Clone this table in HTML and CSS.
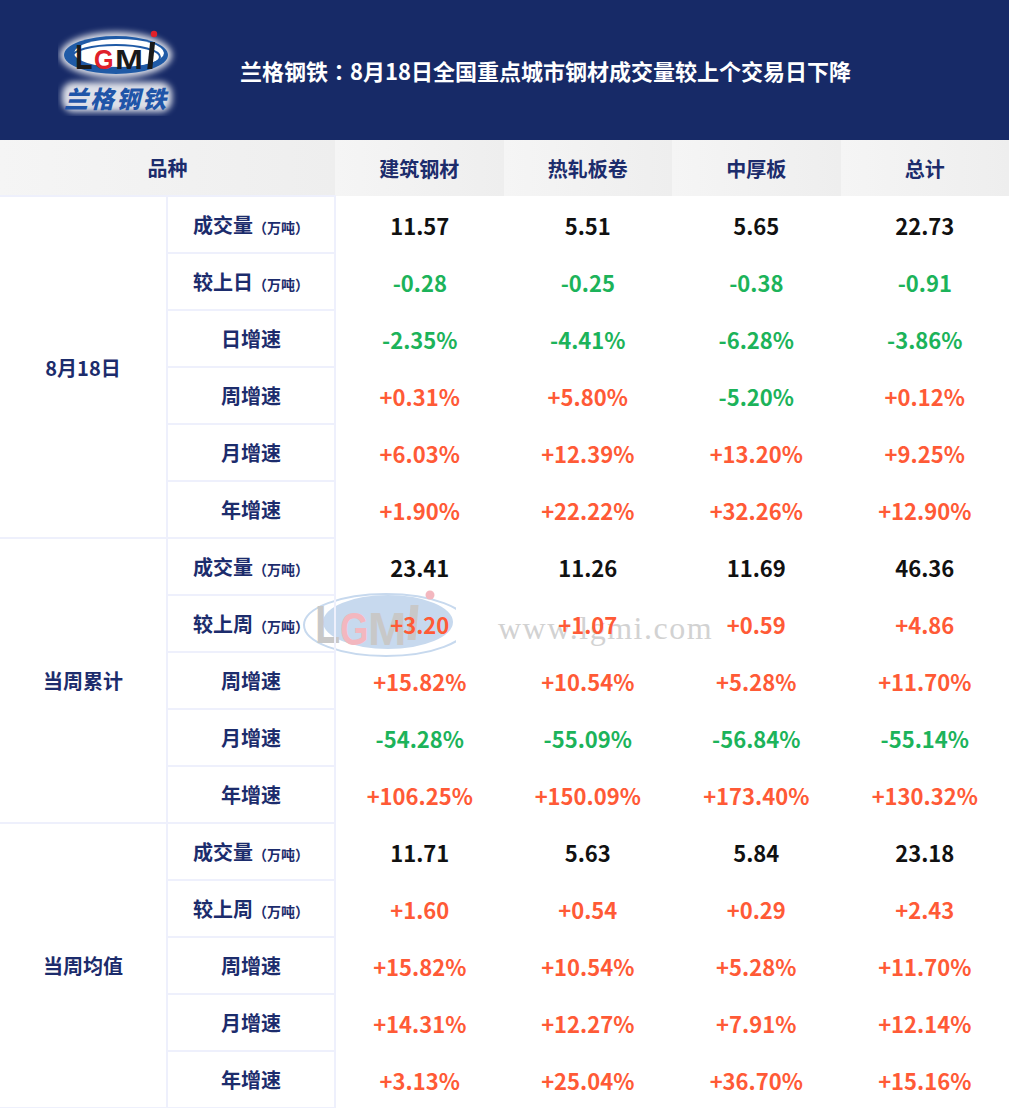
FILE: index.html
```html
<!DOCTYPE html>
<html lang="zh-CN">
<head>
<meta charset="utf-8">
<title>兰格钢铁</title>
<link rel="stylesheet" href="styles.css">
</head>
<body>
<div class="page">
  <header class="banner">
    <svg class="logo" width="124" height="92" viewBox="0 0 124 92">
      <defs>
        <filter id="glow" x="-20%" y="-20%" width="140%" height="140%">
          <feGaussianBlur stdDeviation="3"/>
        </filter>
      </defs>
      <g filter="url(#glow)" fill="#ffffff" opacity="0.85">
        <ellipse cx="58" cy="31" rx="56" ry="23"/>
        <rect x="4" y="58" width="110" height="30" rx="12"/>
      </g>
      <ellipse cx="58" cy="31" rx="52" ry="19" fill="#1f5aa6"/>
      <ellipse cx="61" cy="29" rx="45" ry="14" fill="#ffffff"/>
      <ellipse cx="58" cy="33" rx="44" ry="12" fill="none" stroke="#1f5aa6" stroke-width="2"/>
      <text class="lg-l" transform="translate(17 45) scale(0.8 1)">L</text>
      <text class="lg-g" transform="translate(36 45) scale(0.9 1)">G</text>
      <text class="lg-m" transform="translate(57 45) scale(1.2 1)">M</text>
      <rect x="94" y="18" width="5" height="27" fill="#1a1a1a" transform="skewX(-6)"/>
      <circle cx="96" cy="10" r="3.2" fill="#e0202a"/>
      <text x="6" y="84" class="lg-cn">兰格钢铁</text>
    </svg>
    <h1 class="title">兰格钢铁<span class="colon" lang="zh-TW">：</span>8月18日全国重点城市钢材成交量较上个交易日下降</h1>
  </header>

  <div class="table-wrap">
    <div class="watermark">
      <svg class="wm-logo" width="156" height="70" viewBox="0 0 156 70">
        <ellipse cx="86" cy="37" rx="82" ry="31" fill="none" stroke="#c7d9ee" stroke-width="2"/>
        <ellipse cx="88" cy="34" rx="65" ry="27" fill="#c7d9ee"/>
        <text class="wm-l" transform="translate(15 55) scale(0.78 1)">L</text>
        <text class="wm-g" transform="translate(40 57) scale(0.8 1)">G</text>
        <text class="wm-m" transform="translate(68 57)">M</text>
        <rect x="112" y="17" width="8" height="35" fill="#c8c8c8" transform="skewX(-5)"/>
        <circle cx="130" cy="7" r="4.5" fill="#f3b7bf"/>
      </svg>
      <span class="wm-url">www.lgmi.com</span>
    </div>

    <table class="grid">
      <colgroup>
        <col class="c-group">
        <col class="c-metric">
        <col class="c-val">
        <col class="c-val">
        <col class="c-val">
        <col class="c-val">
      </colgroup>
      <thead>
        <tr>
          <th colspan="2">品种</th>
          <th>建筑钢材</th>
          <th>热轧板卷</th>
          <th>中厚板</th>
          <th>总计</th>
        </tr>
      </thead>
      <tbody class="grp">
        <tr>
          <td class="group" rowspan="6">8月18日</td>
          <td class="metric">成交量<small>（万吨）</small></td>
          <td class="v blk">11.57</td><td class="v blk">5.51</td><td class="v blk">5.65</td><td class="v blk">22.73</td>
        </tr>
        <tr>
          <td class="metric">较上日<small>（万吨）</small></td>
          <td class="v dn">-0.28</td><td class="v dn">-0.25</td><td class="v dn">-0.38</td><td class="v dn">-0.91</td>
        </tr>
        <tr>
          <td class="metric">日增速</td>
          <td class="v dn">-2.35%</td><td class="v dn">-4.41%</td><td class="v dn">-6.28%</td><td class="v dn">-3.86%</td>
        </tr>
        <tr>
          <td class="metric">周增速</td>
          <td class="v up">+0.31%</td><td class="v up">+5.80%</td><td class="v dn">-5.20%</td><td class="v up">+0.12%</td>
        </tr>
        <tr>
          <td class="metric">月增速</td>
          <td class="v up">+6.03%</td><td class="v up">+12.39%</td><td class="v up">+13.20%</td><td class="v up">+9.25%</td>
        </tr>
        <tr>
          <td class="metric">年增速</td>
          <td class="v up">+1.90%</td><td class="v up">+22.22%</td><td class="v up">+32.26%</td><td class="v up">+12.90%</td>
        </tr>
      </tbody>
      <tbody class="grp">
        <tr>
          <td class="group" rowspan="5">当周累计</td>
          <td class="metric">成交量<small>（万吨）</small></td>
          <td class="v blk">23.41</td><td class="v blk">11.26</td><td class="v blk">11.69</td><td class="v blk">46.36</td>
        </tr>
        <tr>
          <td class="metric">较上周<small>（万吨）</small></td>
          <td class="v up">+3.20</td><td class="v up">+1.07</td><td class="v up">+0.59</td><td class="v up">+4.86</td>
        </tr>
        <tr>
          <td class="metric">周增速</td>
          <td class="v up">+15.82%</td><td class="v up">+10.54%</td><td class="v up">+5.28%</td><td class="v up">+11.70%</td>
        </tr>
        <tr>
          <td class="metric">月增速</td>
          <td class="v dn">-54.28%</td><td class="v dn">-55.09%</td><td class="v dn">-56.84%</td><td class="v dn">-55.14%</td>
        </tr>
        <tr>
          <td class="metric">年增速</td>
          <td class="v up">+106.25%</td><td class="v up">+150.09%</td><td class="v up">+173.40%</td><td class="v up">+130.32%</td>
        </tr>
      </tbody>
      <tbody class="grp">
        <tr>
          <td class="group" rowspan="5">当周均值</td>
          <td class="metric">成交量<small>（万吨）</small></td>
          <td class="v blk">11.71</td><td class="v blk">5.63</td><td class="v blk">5.84</td><td class="v blk">23.18</td>
        </tr>
        <tr>
          <td class="metric">较上周<small>（万吨）</small></td>
          <td class="v up">+1.60</td><td class="v up">+0.54</td><td class="v up">+0.29</td><td class="v up">+2.43</td>
        </tr>
        <tr>
          <td class="metric">周增速</td>
          <td class="v up">+15.82%</td><td class="v up">+10.54%</td><td class="v up">+5.28%</td><td class="v up">+11.70%</td>
        </tr>
        <tr>
          <td class="metric">月增速</td>
          <td class="v up">+14.31%</td><td class="v up">+12.27%</td><td class="v up">+7.91%</td><td class="v up">+12.14%</td>
        </tr>
        <tr>
          <td class="metric">年增速</td>
          <td class="v up">+3.13%</td><td class="v up">+25.04%</td><td class="v up">+36.70%</td><td class="v up">+15.16%</td>
        </tr>
      </tbody>
    </table>
  </div>
</div>
</body>
</html>
```

FILE: styles.css
```css
* { box-sizing: border-box; }
html, body { margin: 0; padding: 0; background: #ffffff; }
body {
  font-family: "Noto Sans CJK SC", "Noto Sans", sans-serif;
  width: 1009px;
}
.page { width: 1009px; }

.banner {
  height: 140px;
  background: #172a67;
  display: flex;
  align-items: center;
  padding-left: 58px;
}
.logo { display: block; }
.lg-l { font: 700 36px "Liberation Sans", sans-serif; fill: #1a1a1a; }
.lg-g { font: 700 28px "Liberation Sans", sans-serif; fill: #e0202a; }
.lg-m { font: 700 28px "Liberation Sans", sans-serif; fill: #1a1a1a; }
.lg-cn { font: 900 24px "Noto Sans CJK SC", sans-serif; fill: #1f55a8; letter-spacing: 2px; font-style: italic; }
.title {
  margin: 0 0 0 58px;
  color: #ffffff;
  font-size: 22px;
  font-weight: 700;
  text-spacing-trim: space-all;
}
.colon {
  font-family: "Noto Sans CJK TC", "Noto Sans CJK JP", sans-serif;
  text-spacing-trim: space-all;
}

.table-wrap { position: relative; }
.watermark {
  position: absolute;
  left: 300px;
  top: 448px;
  display: flex;
  align-items: center;
  gap: 42px;
  pointer-events: none;
  z-index: 0;
}
.wm-logo { display: block; }
.wm-l { font: 700 53px "Liberation Sans", sans-serif; fill: #c8c8c8; }
.wm-g { font: 700 46px "Liberation Sans", sans-serif; fill: #f3b7bf; }
.wm-m { font: 700 46px "Liberation Sans", sans-serif; fill: #c8c8c8; }
.wm-url {
  font-family: "Liberation Serif", serif;
  font-size: 32px;
  color: #d2d2d2;
  letter-spacing: 1.5px;
  margin-top: 10px;
}

.grid {
  position: relative;
  z-index: 1;
  width: 1009px;
  border-collapse: collapse;
  table-layout: fixed;
}
.c-group { width: 167px; }
.c-metric { width: 168px; }
.c-val { width: 168.5px; }

.grid th {
  height: 56px;
  padding: 0;
  background: linear-gradient(90deg, #f5f5f5, #eeeeee);
  color: #1c2c6c;
  font-size: 20px;
  font-weight: 700;
  text-align: center;
  vertical-align: middle;
}
.grid td {
  height: 57px;
  padding: 0;
  text-align: center;
  vertical-align: middle;
}
.grid td.group,
.grid td.metric {
  border: 2px solid #eef0fc;
  color: #1c2c6c;
  font-size: 20px;
  font-weight: 700;
}
.grid td.group { border-left: none; }
.metric small {
  font-size: 14px;
  font-weight: 700;
}
.v {
  font-size: 22px;
  font-weight: 700;
}
.blk { color: #111111; }
.dn { color: #1cb35a; }
.up { color: #ff5a36; }
```
